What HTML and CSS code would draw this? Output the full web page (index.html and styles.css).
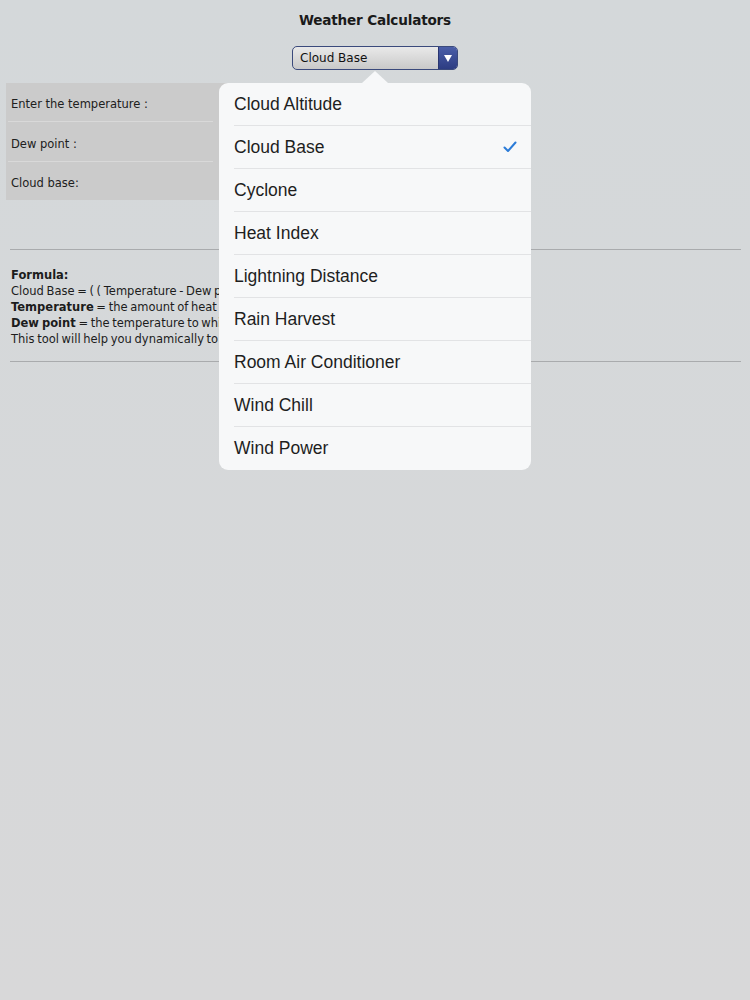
FILE: index.html
```html
<!DOCTYPE html>
<html>
<head>
<meta charset="utf-8">
<link rel="stylesheet" href="styles.css">
</head>
<body>
<div class="page">
  <h1 class="title">Weather Calculators</h1>
  <div class="select-wrap">
    <div class="select">
      <span class="select-text">Cloud Base</span>
      <span class="select-btn"><span class="tri"></span></span>
    </div>
  </div>

  <div class="panel">
    <div class="row r1"><div class="label">Enter the temperature :</div></div>
    <div class="row r2"><div class="label">Dew point :</div></div>
    <div class="row r3 last"><div class="label">Cloud base:</div></div>
  </div>

  <div class="spacer"></div>
  <hr class="rule">
  <div class="formula">
    <div class="b">Formula:</div>
    <div>Cloud Base = ( ( Temperature - Dew point ) / 4.4 ) x 1000</div>
    <div><span class="b">Temperature</span> = the amount of heat or cold in the air.</div>
    <div><span class="b">Dew point</span> = the temperature to which air is cooled.</div>
    <div>This tool will help you dynamically to find cloud base.</div>
  </div>
  <hr class="rule">
</div>

<div class="popover">
  <div class="arrow"></div>
  <ul class="list">
    <li>Cloud Altitude</li>
    <li class="checked">Cloud Base<svg class="check" width="14" height="12" viewBox="0 0 14 12"><path d="M1.5 6.5 L5 10 L12.5 1.5" fill="none" stroke="#2b7bd8" stroke-width="2" stroke-linecap="round" stroke-linejoin="round"/></svg></li>
    <li>Cyclone</li>
    <li>Heat Index</li>
    <li>Lightning Distance</li>
    <li>Rain Harvest</li>
    <li>Room Air Conditioner</li>
    <li>Wind Chill</li>
    <li class="last">Wind Power</li>
  </ul>
</div>
</body>
</html>
```

FILE: styles.css
```css
html, body {
  margin: 0;
  padding: 0;
}
body {
  background: linear-gradient(#d4d8da, #d8d8d9);
  font-family: "DejaVu Sans", Tahoma, sans-serif;
  color: #1c1c1c;
  min-height: 1000px;
  position: relative;
}
.page {
  padding: 12px 0 0 0;
}
.title {
  margin: 0;
  text-align: center;
  font-size: 13.6px;
  font-weight: bold;
  line-height: 16px;
  color: #1a1a1a;
  letter-spacing: -0.2px;
}
.select-wrap {
  display: flex;
  justify-content: center;
  margin-top: 18px;
}
.select {
  width: 164px;
  height: 22px;
  border: 1px solid #3b4a7c;
  border-radius: 5px;
  background: linear-gradient(#e9e9e9, #c9c9c9);
  display: flex;
  align-items: center;
  overflow: hidden;
}
.select-text {
  flex: 1;
  padding-left: 7px;
  font-size: 12px;
  color: #111;
}
.select-btn {
  width: 18px;
  height: 100%;
  background: linear-gradient(#4a5ea8, #2d3d82);
  border-left: 1px solid #2a3570;
  display: flex;
  align-items: center;
  justify-content: center;
}
.tri {
  width: 0;
  height: 0;
  border-left: 4px solid transparent;
  border-right: 4px solid transparent;
  border-top: 7px solid #ffffff;
}
.panel {
  margin: 13px 0 0 6px;
  width: 380px;
  background: #cbcbcb;
  padding-left: 2px;
}
.row {
  display: flex;
}
.r1 { height: 39px; }
.r2 { height: 40px; }
.r3 { height: 38px; }
.label {
  width: 205px;
  border-bottom: 1px solid #d9d9d9;
  font-size: 11.5px;
  display: flex;
  align-items: center;
  padding: 4px 0 0 3px;
  box-sizing: border-box;
  color: #202020;
}
.row.last .label {
  border-bottom: none;
}
.spacer {
  height: 49px;
}
.rule {
  margin: 0 9px 0 10px;
  border: 0;
  border-top: 1px solid #a9abad;
  height: 0;
}
.formula {
  padding: 17px 11px 14px 11px;
  font-size: 11.5px;
  line-height: 16px;
  word-spacing: -1px;
  color: #1c1c1c;
}
.b {
  font-weight: bold;
}
.popover {
  position: absolute;
  left: 219px;
  top: 83px;
  width: 312px;
  background: #f7f8f9;
  border-radius: 9px;
}
.arrow {
  position: absolute;
  left: 143px;
  top: -12px;
  width: 0;
  height: 0;
  border-left: 13px solid transparent;
  border-right: 13px solid transparent;
  border-bottom: 12px solid #f7f8f9;
}
.list {
  list-style: none;
  margin: 0;
  padding: 0 0 0 15px;
}
.list li {
  height: 43px;
  box-sizing: border-box;
  border-bottom: 1px solid #e2e3e5;
  display: flex;
  align-items: center;
  justify-content: space-between;
  padding-right: 14px;
  font-family: "Liberation Sans", Arial, sans-serif;
  font-size: 17.5px;
  color: #1e1e1e;
}
.list li.last {
  border-bottom: none;
}
.check {
  display: block;
}
```
